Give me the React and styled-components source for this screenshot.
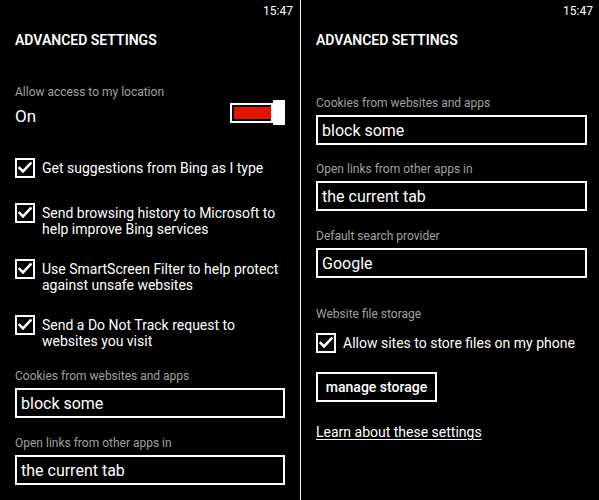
import React from "react";
import styled, { createGlobalStyle } from "styled-components";

const Global = createGlobalStyle`
  html, body { margin: 0; padding: 0; background: #000; }
  body { font-family: Roboto, "Open Sans", sans-serif; color: #fff; }
  * { box-sizing: border-box; }
`;

const Screen = styled.div`
  display: flex;
  width: 599px;
  height: 500px;
  background: #000;
  overflow: hidden;
`;

const Panel = styled.div`
  width: ${(p) => p.$w}px;
  flex: none;
  display: flex;
  flex-direction: column;
  padding: 0 ${(p) => p.$pr}px 0 15px;
  overflow: hidden;
`;

const Divider = styled.div`
  width: 1px;
  flex: none;
  background: #fff;
`;

const StatusBar = styled.div`
  height: 22px;
  margin-right: ${(p) => -p.$over}px;
  padding-top: 3px;
  display: flex;
  justify-content: flex-end;
  font-size: 12px;
  line-height: 16px;
`;

const Title = styled.div`
  margin-top: 8px;
  font-size: 14px;
  line-height: 20px;
  font-weight: 600;
`;

const Label = styled.div`
  margin-top: ${(p) => p.$mt || 0}px;
  font-size: 12px;
  line-height: 16px;
  color: #a0a0a0;
`;

const ToggleRow = styled.div`
  margin-top: 34px;
  display: flex;
  justify-content: space-between;
  align-items: flex-end;
`;

const ToggleValue = styled.div`
  margin-top: 5px;
  font-size: 17px;
  line-height: 22px;
`;

const Toggle = styled.div`
  display: flex;
  align-items: center;
  margin-bottom: 2px;
`;

const Track = styled.div`
  width: 43px;
  height: 20px;
  border: 2px solid #fff;
  padding: 2px 0 2px 2px;
  display: flex;
`;

const Fill = styled.div`
  flex: 1;
  background: #e31400;
`;

const Thumb = styled.div`
  width: 12px;
  height: 25px;
  background: #fff;
`;

const CheckList = styled.div`
  margin-top: ${(p) => p.$mt || 0}px;
  display: flex;
  flex-direction: column;
  gap: 22px;
`;

const CheckItem = styled.div`
  display: flex;
  align-items: flex-start;
  gap: 7px;
  min-height: 23px;
`;

const Box = styled.div`
  width: 20px;
  height: 20px;
  flex: none;
  border: 2px solid #fff;
  display: flex;
  align-items: center;
  justify-content: center;
`;

const CheckText = styled.div`
  padding-top: 2px;
  font-size: 14px;
  line-height: 16px;
`;

const Select = styled.div`
  margin-top: 4px;
  height: 30px;
  border: 2px solid #fff;
  padding: 0 4px;
  display: flex;
  align-items: center;
  font-size: 16px;
`;

const Button = styled.div`
  margin-top: ${(p) => p.$mt || 0}px;
  align-self: flex-start;
  height: 30px;
  width: 121px;
  border: 2px solid #fff;
  display: flex;
  align-items: center;
  justify-content: center;
  font-size: 14px;
  font-weight: 500;
`;

const Link = styled.div`
  margin-top: ${(p) => p.$mt || 0}px;
  align-self: flex-start;
  font-size: 14px;
  line-height: 20px;
  text-decoration: underline;
  text-underline-offset: 2px;
`;

function Check() {
  return (
    <svg width="14" height="12" viewBox="0 0 14 12">
      <polyline
        points="1.5,6 5,9.5 12.5,1.5"
        fill="none"
        stroke="#fff"
        strokeWidth="2.6"
        strokeLinecap="square"
      />
    </svg>
  );
}

function CheckRow({ children }) {
  return (
    <CheckItem>
      <Box>
        <Check />
      </Box>
      <CheckText>{children}</CheckText>
    </CheckItem>
  );
}

function Field({ label, value, mt }) {
  return (
    <>
      <Label $mt={mt}>{label}</Label>
      <Select>{value}</Select>
    </>
  );
}

export default function App() {
  return (
    <Screen>
      <Global />
      <Panel $w={300} $pr={15}>
        <StatusBar $over={8}>15:47</StatusBar>
        <Title>ADVANCED SETTINGS</Title>
        <ToggleRow>
          <div>
            <Label>Allow access to my location</Label>
            <ToggleValue>On</ToggleValue>
          </div>
          <Toggle>
            <Track>
              <Fill />
            </Track>
            <Thumb />
          </Toggle>
        </ToggleRow>
        <CheckList $mt={31}>
          <CheckRow>Get suggestions from Bing as I type</CheckRow>
          <CheckRow>
            Send browsing history to Microsoft to
            <br />
            help improve Bing services
          </CheckRow>
          <CheckRow>
            Use SmartScreen Filter to help protect
            <br />
            against unsafe websites
          </CheckRow>
          <CheckRow>
            Send a Do Not Track request to
            <br />
            websites you visit
          </CheckRow>
        </CheckList>
        <Field mt={19} label="Cookies from websites and apps" value="block some" />
        <Field mt={17} label="Open links from other apps in" value="the current tab" />
      </Panel>
      <Divider />
      <Panel $w={298} $pr={12}>
        <StatusBar $over={6}>15:47</StatusBar>
        <Title>ADVANCED SETTINGS</Title>
        <Field mt={45} label="Cookies from websites and apps" value="block some" />
        <Field mt={16} label="Open links from other apps in" value="the current tab" />
        <Field mt={17} label="Default search provider" value="Google" />
        <Label $mt={28}>Website file storage</Label>
        <CheckList $mt={11}>
          <CheckRow>Allow sites to store files on my phone</CheckRow>
        </CheckList>
        <Button $mt={16}>manage storage</Button>
        <Link $mt={20}>Learn about these settings</Link>
      </Panel>
    </Screen>
  );
}
